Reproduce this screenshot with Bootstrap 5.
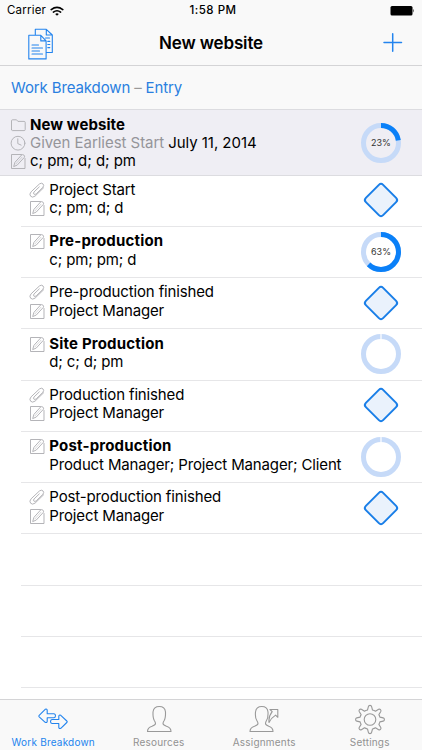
<!DOCTYPE html>
<html lang="en">
<head>
<meta charset="utf-8">
<meta name="viewport" content="width=device-width, initial-scale=1">
<title>New website</title>
<link href="https://cdn.jsdelivr.net/npm/bootstrap@5.3.0/dist/css/bootstrap.min.css" rel="stylesheet">
<style>
body{font-family:Inter,"Liberation Sans",sans-serif;color:#000;font-size:15px;background:#fff}
svg{display:block;fill:none;stroke-linejoin:round;stroke-linecap:round;flex:none}
.screen{height:750px;background:#fff}
.status{height:22px;font-size:11.5px;background:#f9f9f9;letter-spacing:.2px}
.status .carrier{margin-left:-1px}
.status .clock{font-weight:500;letter-spacing:.5px}
.titlebar{height:44px;background:#f9f9f9;border-bottom:1px solid #d4d4d6}
.titlebar h1{font-size:17px;font-weight:600;letter-spacing:-.15px;line-height:20px;margin-top:-1px}
.crumbs{height:44px;background:#f9f9f9;border-bottom:1px solid #dcdce0;color:#999;padding:2px 0 0 11px;letter-spacing:-.12px}
.crumbs a{color:#2a7fe0;text-decoration:none}
.blue{stroke:#2384ee}
.side{width:44px}
.summary{height:65.6px;background:#efeef4;border-bottom:1px solid #dcdce0;padding:5.8px 0 0 10px}
.line{height:18.35px;line-height:18.35px;white-space:nowrap;display:flex;letter-spacing:-.14px}
.line.fw-bold{letter-spacing:.18px}
.summary .line{letter-spacing:-.04px}
.summary .fw-bold{letter-spacing:.08px}
.line svg{stroke:#b0b0b4;stroke-width:.95;margin-right:4px}
.entry{height:51.25px;margin-left:21px;border-bottom:1px solid #e6e6e8;padding:5.4px 0 0 8.300px}
.entry .nopic{padding-left:20px}
.muted{color:#95959a}
.gauge{width:42px;height:42px;margin-right:20px}
.summary .gauge{margin-top:6px}
.entry .gauge{margin-top:-1.5px}
.gauge text{font-size:9px;fill:#333;stroke:none;text-anchor:middle}
.tabs{height:51px;background:#f9f9f9;border-top:1px solid #d4d4d6}
.tab{width:105.5px;color:#929292;font-size:10px;line-height:12px;letter-spacing:.2px;text-decoration:none;padding:4px 0 0 1px}
.tab svg{stroke:#999;stroke-width:1.1;margin-bottom:.5px}
.tab.on{color:#2384ee}.tab.on svg{stroke:#2384ee}
</style>
</head>
<body>
<svg width="0" height="0" class="position-absolute" aria-hidden="true">
<defs>
<symbol id="pencil" viewBox="0 0 16 18"><path d="M11.500 2.500h-10v14h13.500V6.500"/><path d="M3.800 14.200 4.900 10.400 11.600 3q1.100-.9 2.300.1t.4 2.300L7.500 12.800Z"/><path d="M5.900 11.900 12 5.200" stroke-width=".5"/></symbol>
<symbol id="clip" viewBox="0 0 16 18"><path d="M10.300 5.900 5.100 10.900q-1.100 1.400-.2 2.200t2.300-.2l6.600-6.500q1.700-2 .2-3.500t-3.600.1L2.100 10.800q-2.200 2.500-.5 4.400t4.500-.1l8.500-8.300"/></symbol>
<symbol id="folder" viewBox="0 0 16 18"><path d="M1.500 13.600V4.800q0-1 1-1h4l1.400 1.600h6.300q1 0 1 1v7.200q0 1-1 1H2.500q-1 0-1-1Z"/></symbol>
<symbol id="time" viewBox="0 0 16 18"><circle cx="8" cy="9.200" r="6.900"/><path d="M7.800 4.800v4.800l3.300 1.500"/></symbol>
<symbol id="milestone" viewBox="0 0 42 42"><rect x="8.800" y="8.800" width="24.400" height="24.400" rx="3" transform="rotate(45 21 21)" fill="#eaf2fc" stroke="#1a7fe8" stroke-width="2"/></symbol>
<symbol id="empty" viewBox="0 0 42 42"><circle cx="21" cy="21" r="17.500" stroke="#c6daf8" stroke-width="5"/><path d="M21 .5v6" stroke="#fff" stroke-width="1.200" stroke-linecap="butt"/></symbol>
</defs>
</svg>
<div class="screen d-flex flex-column overflow-hidden">
<div class="status d-flex align-items-center px-2">
<div class="col d-flex align-items-center"><span class="carrier">Carrier</span>
<svg class="ms-1" width="14" height="12" viewBox="0 0 14 12" stroke="#000" stroke-width="1.600" stroke-linecap="butt"><path d="M1.200 4.600q5.800-4.500 11.600 0M3.400 7.100q3.600-2.700 7.200 0"/><path d="M5.200 8.900q1.800-1.300 3.600 0L7 10.700Z" fill="#000" stroke="none"/></svg></div>
<div class="clock ps-1">1:58 PM</div>
<div class="col d-flex justify-content-end"><svg width="25" height="12" viewBox="0 0 25 12"><rect x="1.500" y="1" width="22" height="9.500" rx="1.500" fill="#000"/><path d="M24 4q1.200 1.700 0 3.400Z" fill="#000"/></svg></div>
</div>
<header class="titlebar d-flex align-items-center justify-content-between">
<div class="side ps-4"><svg class="blue ms-1" width="28" height="34" viewBox="0 0 28 34" stroke-width="1.100"><path d="M.8 8.300h12l5.300 5.600v18H.8ZM12.800 8.300v5.600h5.300M4 18h6.500M4 21h10.500M4 24h7.500M4 27h10.500M7.300 8V2.300h11l6 5.700v17.500h-5.800M18.300 2.300V8h6M17.500 11h4M19.800 14.400h2M19.800 17.500h2M19.800 20.600h2"/></svg></div>
<h1 class="mb-0">New website</h1>
<div class="side ps-1"><svg class="blue" width="22" height="22" viewBox="0 0 22 22" stroke-width="1.500" stroke-linecap="butt"><path d="M2 9.500h17.500M10.700.8v17.500"/></svg></div>
</header>
<nav class="crumbs d-flex align-items-center gap-1"><a href="#">Work Breakdown</a><span>–</span><a href="#">Entry</a></nav>
<main class="flex-grow-1 overflow-hidden">
<section class="summary d-flex justify-content-between">
<div>
<div class="line fw-bold"><svg width="16" height="18"><use href="#folder"/></svg>New website</div>
<div class="line"><svg width="16" height="18"><use href="#time"/></svg><span class="muted me-1">Given Earliest Start</span>July 11, 2014</div>
<div class="line"><svg width="16" height="18"><use href="#pencil"/></svg>c; pm; d; d; pm</div>
</div>
<svg class="gauge" viewBox="0 0 42 42"><circle cx="21" cy="21" r="17.500" stroke="#c6daf8" stroke-width="5"/><circle cx="21" cy="21" r="17.500" pathLength="100" stroke-dasharray="22.500 77.500" stroke="#0a80f8" stroke-width="5" stroke-linecap="butt" transform="rotate(-90 21 21)"/><text x="21" y="24.300">23%</text></svg>
</section>
<div class="entry d-flex justify-content-between"><div><div class="line"><svg width="16" height="18"><use href="#clip"/></svg>Project Start</div><div class="line"><svg width="16" height="18"><use href="#pencil"/></svg>c; pm; d; d</div></div><svg class="gauge"><use href="#milestone"/></svg></div>
<div class="entry d-flex justify-content-between"><div><div class="line fw-bold"><svg width="16" height="18"><use href="#pencil"/></svg>Pre-production</div><div class="line nopic">c; pm; pm; d</div></div>
<svg class="gauge" viewBox="0 0 42 42"><circle cx="21" cy="21" r="17.500" stroke="#c6daf8" stroke-width="5"/><circle cx="21" cy="21" r="17.500" pathLength="100" stroke-dasharray="62.500 37.500" stroke="#0a80f8" stroke-width="5" stroke-linecap="butt" transform="rotate(-90 21 21)"/><text x="21" y="24.300">63%</text></svg></div>
<div class="entry d-flex justify-content-between"><div><div class="line"><svg width="16" height="18"><use href="#clip"/></svg>Pre-production finished</div><div class="line"><svg width="16" height="18"><use href="#pencil"/></svg>Project Manager</div></div><svg class="gauge"><use href="#milestone"/></svg></div>
<div class="entry d-flex justify-content-between"><div><div class="line fw-bold"><svg width="16" height="18"><use href="#pencil"/></svg>Site Production</div><div class="line nopic">d; c; d; pm</div></div><svg class="gauge"><use href="#empty"/></svg></div>
<div class="entry d-flex justify-content-between"><div><div class="line"><svg width="16" height="18"><use href="#clip"/></svg>Production finished</div><div class="line"><svg width="16" height="18"><use href="#pencil"/></svg>Project Manager</div></div><svg class="gauge"><use href="#milestone"/></svg></div>
<div class="entry d-flex justify-content-between"><div><div class="line fw-bold"><svg width="16" height="18"><use href="#pencil"/></svg>Post-production</div><div class="line nopic">Product Manager; Project Manager; Client</div></div><svg class="gauge"><use href="#empty"/></svg></div>
<div class="entry d-flex justify-content-between"><div><div class="line"><svg width="16" height="18"><use href="#clip"/></svg>Post-production finished</div><div class="line"><svg width="16" height="18"><use href="#pencil"/></svg>Project Manager</div></div><svg class="gauge"><use href="#milestone"/></svg></div>
<div class="entry"></div><div class="entry"></div><div class="entry"></div>
</main>
<footer class="tabs d-flex flex-shrink-0">
<a href="#" class="tab on d-flex flex-column align-items-center"><svg width="30" height="31" viewBox="0 0 30 31"><path d="M1.200 11.300 7.200 5.300Q9 4.500 9.200 6.300V9.800H16q1.500.2 1.500 2t-1.500 2H9.200V17.300q-.3 1.800-2 1L1.200 12.800q-.8-.8 0-1.500ZM28.800 17 22.800 11.300q-1.800-.8-2 1V15.500H14q-1.500.2-1.500 2t1.500 2h6.800V23.300q.3 1.800 2 1L28.800 18.500q.8-.8 0-1.500Z"/></svg>Work Breakdown</a>
<a href="#" class="tab d-flex flex-column align-items-center"><svg width="30" height="31" viewBox="0 0 30 31"><path d="M3.500 27.500q0-4 4.500-5.300 3.500-1.200 3.500-2.700 0-1.400-1.200-3Q8.800 14 9 8q.7-5.500 6.300-5.500T21.500 8q.2 6-1.300 8.500-1.200 1.600-1.200 3 0 1.500 3.500 2.700 4.500 1.300 4.500 5.300Z"/></svg>Resources</a>
<a href="#" class="tab d-flex flex-column align-items-center"><svg width="30" height="31" viewBox="0 0 30 31"><path d="M1 27.500q0-4 4.500-5.300Q9 21 9 19.500q0-1.400-1.200-3Q6 14 6.500 8 7.200 2.500 12.800 2.500T19 8q.3 6-1.500 8.500-1 1.600-1 3 0 1.500 3.300 2.700 4.200 1.300 4.200 5.300ZM21 5.500H28.800V13.300L26.600 11.100Q22 14 20 18.500 19.300 12.500 23.200 7.700Z"/></svg>Assignments</a>
<a href="#" class="tab d-flex flex-column align-items-center"><svg width="30" height="31" viewBox="0 0 30 31"><circle cx="15" cy="15.500" r="5.800"/><path d="M12.500 6 13.400 2.600q.2-1.200 1.600-1.200t1.600 1.200l.9 3.400q1.800.5 3 1.200L23.600 5.300q1.100-.5 1.900.3t.3 1.900L23.900 10.600q.7 1.200 1 2.500l3.300.8q1.200.3 1.200 1.600t-1.200 1.600l-3.300.8q-.3 1.300-1 2.500l1.900 3.100q.5 1.100-.3 1.900t-1.900.3L20.500 23.800q-1.200.7-3 1.200l-.9 3.400q-.2 1.200-1.600 1.200t-1.600-1.200L12.500 25q-1.800-.5-3-1.200L6.400 25.700q-1.100.5-1.900-.3t-.3-1.900L6.100 20.400q-.7-1.200-1-2.500l-3.300-.8Q.6 16.800.6 15.500t1.200-1.600l3.300-.8q.3-1.300 1-2.500L4.200 7.500q-.5-1.100.3-1.900t1.900-.3L9.500 7.200q1.200-.7 3-1.200Z"/></svg>Settings</a>
</footer>
</div>
<script src="https://cdn.jsdelivr.net/npm/bootstrap@5.3.0/dist/js/bootstrap.bundle.min.js"></script>
</body>
</html>
